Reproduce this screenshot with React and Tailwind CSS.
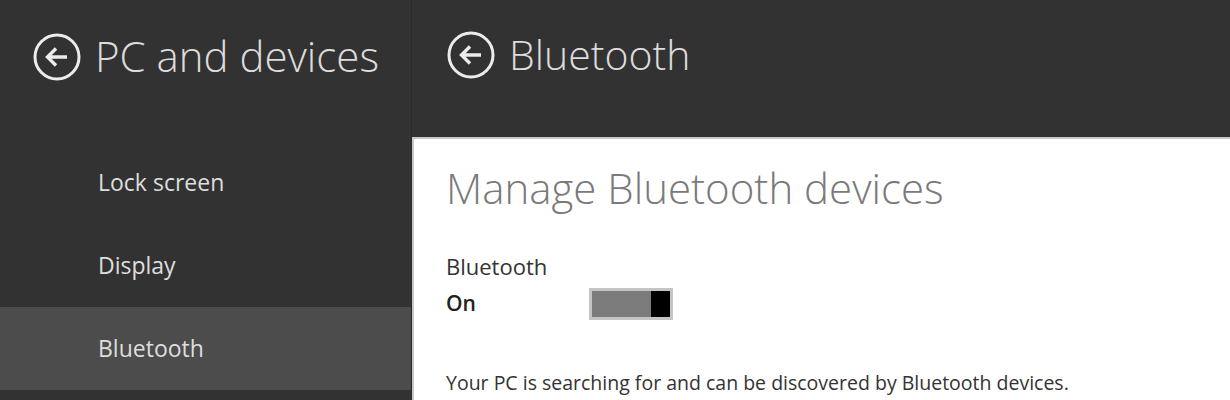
const BackIcon = ({ size = 48 }) => (
  <svg width={size} height={size} viewBox="0 0 48 48" fill="none" stroke="#ececec" strokeWidth="3">
    <circle cx="24" cy="24" r="22" />
    <path d="M34 24H15M23 15.5L14.5 24L23 32.5" strokeWidth="3.4" strokeLinecap="butt" strokeLinejoin="miter" />
  </svg>
);

const navItems = ["Lock screen", "Display", "Bluetooth"];

export default function App() {
  return (
    <div className="flex h-[400px] w-[1230px] overflow-hidden bg-[#323232] font-['Open_Sans',sans-serif]">
      <aside className="flex w-[412px] shrink-0 flex-col border-r border-[#2a2a2a]">
        <div className="flex h-[137px] items-start gap-[14px] pl-[33px] pt-[33px]">
          <BackIcon />
          <h1 className="h-[48px] text-[42px] leading-[46px] font-light text-[#dcdcdc]">PC and devices</h1>
        </div>
        <nav className="flex flex-col pt-[4px]">
          {navItems.map((item) => (
            <div
              key={item}
              className={`flex h-[83px] items-center pl-[98px] text-[23px] text-[#dedede] ${
                item === "Bluetooth" ? "bg-[#4c4c4c]" : ""
              }`}
            >
              {item}
            </div>
          ))}
        </nav>
      </aside>
      <main className="flex flex-1 flex-col">
        <div className="flex h-[137px] items-start gap-[14px] pl-[35px] pt-[31px]">
          <BackIcon />
          <h1 className="h-[48px] text-[41px] leading-[46px] font-light text-[#dcdcdc]">Bluetooth</h1>
        </div>
        <section className="flex-1 border-l-[2px] border-t-[2px] border-[#c8c8c8] bg-white pl-[32px] pt-[25px]">
          <h2 className="text-[42px] leading-[48px] font-light text-[#7a7a7a]">Manage Bluetooth devices</h2>
          <p className="mt-[40px] text-[22px] leading-[28px] text-[#333]">Bluetooth</p>
          <div className="mt-[8px] flex h-[32px] items-center">
            <span className="w-[143px] text-[21px] font-semibold text-[#222]">On</span>
            <div className="flex h-[32px] w-[84px] items-stretch border-[3px] border-[#c4c4c4]">
              <div className="flex-1 bg-[#7b7b7b]" />
              <div className="w-[19px] bg-black" />
            </div>
          </div>
          <p className="mt-[49px] text-[19.5px] leading-[28px] text-[#333]">
            Your PC is searching for and can be discovered by Bluetooth devices.
          </p>
        </section>
      </main>
    </div>
  );
}
